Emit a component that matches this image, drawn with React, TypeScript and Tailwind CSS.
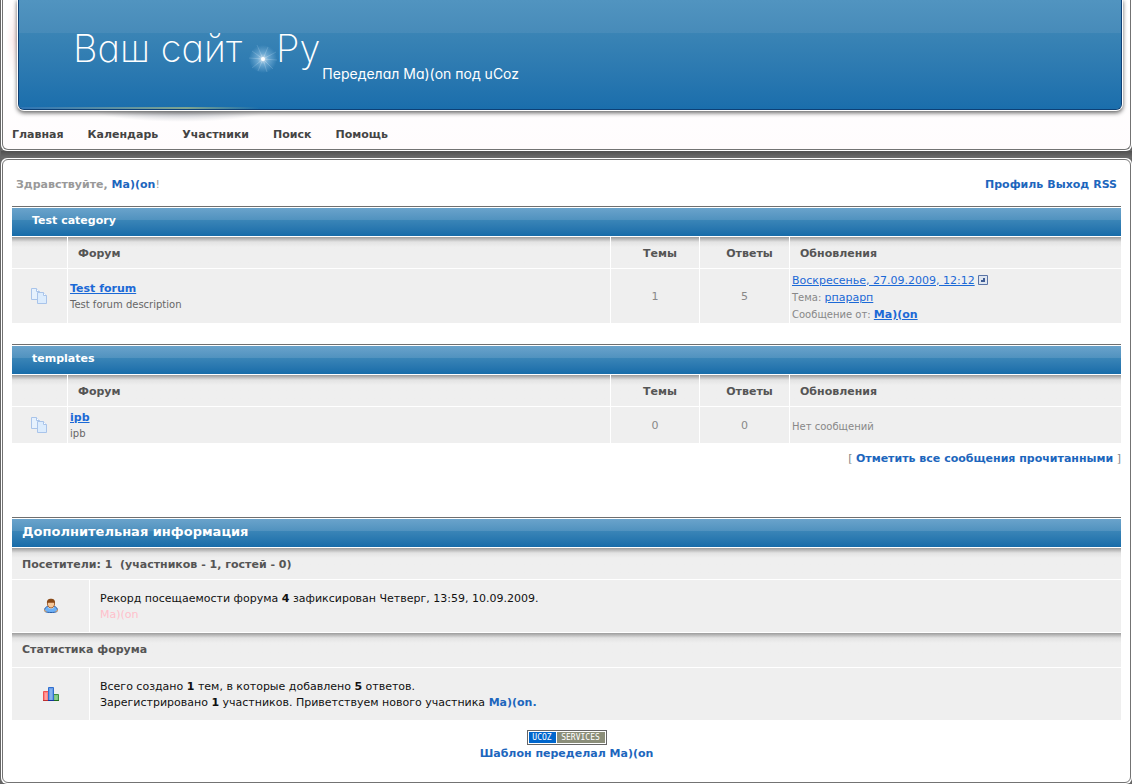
import type { ReactNode } from 'react';

type Forum = {
  title: string;
  description: string;
  topics: number;
  replies: number;
  last?: { date: string; topic: string; author: string };
};

type Category = {
  title: string;
  rowClass: string;
  forums: Forum[];
};

const menu = ['Главная', 'Календарь', 'Участники', 'Поиск', 'Помощь'];

const categories: Category[] = [
  {
    title: 'Test category',
    rowClass: 'h-[54px]',
    forums: [
      {
        title: 'Test forum',
        description: 'Test forum description',
        topics: 1,
        replies: 5,
        last: {
          date: 'Воскресенье, 27.09.2009, 12:12',
          topic: 'рпарарп',
          author: 'Ma)(on',
        },
      },
    ],
  },
  {
    title: 'templates',
    rowClass: 'h-9',
    forums: [{ title: 'ipb', description: 'ipb', topics: 0, replies: 0 }],
  },
];

const headCell =
  'border-b border-white bg-linear-to-b from-[#9c9c9c] via-[#e3e3e3] via-[5px] to-[#efefef] to-[10px] font-bold text-[#555]';

function TitleBar({ children }: { children: ReactNode }) {
  return (
    <div className="border-t border-[#6f6f6f] pt-px">
      <h2 className="flex h-7 items-center bg-linear-to-b from-[#6aa3cb] from-0% via-[#5092bf] via-[12px] to-[#3a85b7] to-[12px]">
        <span className="flex h-full w-full items-center bg-linear-to-b from-transparent from-[12px] via-[#3a85b7] via-[12px] to-[#176ca9] pb-0.5 font-bold text-white">
          {children}
        </span>
      </h2>
    </div>
  );
}

function PagesIcon() {
  return (
    <svg width="17" height="18" viewBox="1 0 17 18" className="mx-auto" aria-hidden="true">
      <path d="M1.5 1.5h5l3 3v8h-8z" fill="#e6f1fd" stroke="#a9c4ea" />
      <path d="M6.5 1.5v3h3" fill="#fff" stroke="#a9c4ea" />
      <path d="M7.5 5.5h6l3 3v8h-9z" fill="#dcecfd" stroke="#a9c4ea" />
      <path d="M13.5 5.5v3h3" fill="#fff" stroke="#a9c4ea" />
    </svg>
  );
}

function UserIcon() {
  return (
    <svg width="16" height="16" viewBox="0 0 16 16" className="mx-auto" aria-hidden="true">
      <path
        d="M4.500 8.500C2.500 9 1.500 10.500 1.500 12.500c0 1 1.500 2 6.500 2s6.500-1 6.500-2c0-2-1-3.500-3-4z"
        fill="#6db1f7"
        stroke="#2b5fa8"
      />
      <path d="M1.500 11.500v1.500l2 .5M14.500 11.500v1.500l-2 .5" fill="none" stroke="#d49a62" />
      <path d="M5 9.500q3 2 6 0" fill="none" stroke="#c6e2ff" />
      <path d="M4.500 4.500h7v2.500q-1 3-3.500 3t-3.500-3z" fill="#f5c89a" stroke="#a8683a" />
      <path d="M4 5.500C3.500 2 5.500.8 8 .8s4.500 1.200 4 4.700L10.500 4h-5z" fill="#8a4a17" />
    </svg>
  );
}

function ChartIcon() {
  return (
    <svg width="16" height="16" viewBox="0 0 16 16" className="mx-auto" aria-hidden="true">
      <path d="M.5 5.500h5v9h-5z" fill="#ff8080" stroke="#ee5050" />
      <path d="M2.500 7.500h1v6h-1z" fill="#ffc9c9" stroke="#ffa0a0" />
      <path d="M10.500 8.500h5v6h-5z" fill="#7fc67f" stroke="#3f8f3f" />
      <path d="M12.500 10.500h1v3h-1z" fill="#aee0ae" stroke="#8ccf8c" />
      <path d="M5.500 1.500h5v13h-5z" fill="#6c9ee6" stroke="#2f6fd0" />
      <path d="M7.500 3.500h1v10h-1z" fill="#8fbcf5" stroke="#86b2ee" />
      <path d="M5 14.500h6" stroke="#17329c" />
      <path d="M0 14.500h5" stroke="#c03030" />
      <path d="M11 14.500h5" stroke="#1f6f1f" />
    </svg>
  );
}

function LastPostIcon() {
  return (
    <svg width="10" height="10" viewBox="0 0 10 10" aria-hidden="true">
      <path d="M.5.5h9v9h-9z" fill="#dfe6f0" stroke="#5a74a6" />
      <path d="M7 3v4H3V5h2V3z" fill="#3f5c94" />
    </svg>
  );
}

function Star() {
  return (
    <svg width="30" height="30" viewBox="0 0 30 30" aria-hidden="true">
      <defs>
        <radialGradient id="halo">
          <stop offset="0" stopColor="#fff" stopOpacity="0.8" />
          <stop offset="0.4" stopColor="#9ccbeb" stopOpacity="0.55" />
          <stop offset="1" stopColor="#8fc2e6" stopOpacity="0" />
        </radialGradient>
        <radialGradient id="rays" gradientUnits="userSpaceOnUse" cx="15" cy="15" r="14">
          <stop offset="0" stopColor="#fff" stopOpacity="0.3" />
          <stop offset="1" stopColor="#b5d8f0" stopOpacity="0.2" />
        </radialGradient>
      </defs>
      <circle cx="15" cy="15" r="14" fill="url(#halo)" />
      <path
        d="M15 15 9 1M15 15 20 3M15 15 28 8M15 15 29 16M15 15 25 25M15 15 19 28M15 15 10 27M15 15 4 24M15 15 1 14M15 15 4 7"
        stroke="url(#rays)"
      />
      <circle cx="15" cy="15" r="2" fill="#fff" />
    </svg>
  );
}

function Header() {
  return (
    <header className="rounded-b-md bg-white px-px pb-px">
      <div className="rounded-b-md border-x border-b border-[#737373] bg-linear-to-b from-white via-white to-[#fffcfd]">
        <div className="relative mr-2 ml-[15px]">
          <div className="absolute top-0 -left-3 h-20 w-3 bg-linear-to-l from-[#fbdede] to-transparent mask-[linear-gradient(transparent,black,transparent)]" />
          <div className="absolute top-[110px] left-[75px] h-3 w-44 bg-[radial-gradient(ellipse_at_top,#b9bdc6,transparent_70%)]" />
          <div className="relative flex h-[110px] overflow-hidden rounded-b-md border-r border-b border-l border-[#0d4076] bg-linear-to-b from-[#5194c0] via-[#478bb9] via-[33px] to-[#478bb9] to-[33px] shadow-[0_0_0_1px_#fff,0_2px_4px_1px_#666]">
            <div className="flex w-full items-start bg-linear-to-b from-transparent from-[33px] via-[#3a84b5] via-[33px] to-[#1a6eac] pl-[54px] font-['Inter',sans-serif] text-white [font-feature-settings:'cv11']">
              <div className="flex pt-6 text-[38px] leading-[48px] font-extralight">
                <span className="w-[175px] whitespace-nowrap">Ваш сайт</span>
                <span className="w-7 pt-5">
                  <Star />
                </span>
                <span>Ру</span>
              </div>
              <p className="pt-16 pl-0.5 text-[14px] leading-5 whitespace-nowrap">
                Переделал Ма)(on под uCoz
              </p>
            </div>
            <div className="absolute bottom-0 left-0 h-0.5 w-60 bg-linear-to-r from-[#2e74b5] via-[#7fa58f] via-70% to-transparent" />
          </div>
        </div>
        <nav className="flex h-[39px] items-center gap-6 pt-2.5 pl-[9px] font-bold text-[#444]">
          {menu.map((item) => (
            <a key={item} href="#">
              {item}
            </a>
          ))}
        </nav>
      </div>
    </header>
  );
}

function CategoryTable({ category }: { category: Category }) {
  return (
    <section>
      <TitleBar>
        <span className="pl-5">{category.title}</span>
      </TitleBar>
      <table className="mt-px w-full table-fixed border-separate border-spacing-0">
        <colgroup>
          <col className="w-[55px]" />
          <col />
          <col className="w-[89px]" />
          <col className="w-[90px]" />
          <col className="w-[332px]" />
        </colgroup>
        <thead>
          <tr className="h-8">
            <th className={headCell} />
            <th className={`${headCell} border-l pt-0.5 pl-2.5 text-left`}>Форум</th>
            <th className={`${headCell} border-l pt-0.5 pl-2.5`}>Темы</th>
            <th className={`${headCell} border-l pt-0.5 pl-2.5`}>Ответы</th>
            <th className={`${headCell} border-l pt-0.5 pl-2.5 text-left`}>Обновления</th>
          </tr>
        </thead>
        <tbody>
          {category.forums.map((forum) => (
            <tr key={forum.title} className={`${category.rowClass} bg-[#efefef] text-[#888]`}>
              <td>
                <PagesIcon />
              </td>
              <td className="border-l border-white pt-0.5 pl-0.5">
                <a href="#" className="block w-fit font-bold text-[#1b69d6] underline">
                  {forum.title}
                </a>
                <p className="text-[10px] text-[#666]">{forum.description}</p>
              </td>
              <td className="border-l border-white pt-0.5 text-center">{forum.topics}</td>
              <td className="border-l border-white pt-0.5 text-center">{forum.replies}</td>
              <td className="border-l border-white pt-0.5 pl-0.5 text-[10px] leading-[17px]">
                {forum.last ? (
                  <>
                    <div className="flex items-center gap-[3px] text-[11px]">
                      <a href="#" className="text-[#1b69d6] underline">
                        {forum.last.date}
                      </a>
                      <LastPostIcon />
                    </div>
                    <div>
                      Тема:{' '}
                      <a href="#" className="text-[11px] text-[#1b69d6] underline">
                        {forum.last.topic}
                      </a>
                    </div>
                    <div>
                      Сообщение от:{' '}
                      <a href="#" className="text-[11px] font-bold text-[#1b69d6] underline">
                        {forum.last.author}
                      </a>
                    </div>
                  </>
                ) : (
                  'Нет сообщений'
                )}
              </td>
            </tr>
          ))}
        </tbody>
      </table>
    </section>
  );
}

function InfoRow({ icon, children }: { icon: ReactNode; children: ReactNode }) {
  return (
    <div className="flex h-[53px] border-b border-white bg-[#efefef]">
      <div className="flex w-[77px] shrink-0 items-center">{icon}</div>
      <div className="flex-1 border-l border-white pt-[11px] pl-2.5 text-[#111]">{children}</div>
    </div>
  );
}

function ForumInfo() {
  return (
    <section className="mt-[50px]">
      <TitleBar>
        <span className="pl-2.5 text-[13px]">Дополнительная информация</span>
      </TitleBar>
      <h3 className={`${headCell} mt-px flex h-8 items-center pt-0.5 pl-2.5 whitespace-pre`}>
        {'Посетители: 1  (участников - 1, гостей - 0)'}
      </h3>
      <InfoRow icon={<UserIcon />}>
        <p>
          Рекорд посещаемости форума <b>4</b> зафиксирован Четверг, 13:59, 10.09.2009.
        </p>
        <a href="#" className="text-[#ffc0cb]">
          Ma)(on
        </a>
      </InfoRow>
      <h3 className={`${headCell} flex h-[35px] items-center pl-2.5`}>Статистика форума</h3>
      <InfoRow icon={<ChartIcon />}>
        <p>
          Всего создано <b>1</b> тем, в которые добавлено <b>5</b> ответов.
        </p>
        <p>
          Зарегистрировано <b>1</b> участников. Приветствуем нового участника{' '}
          <a href="#" className="font-bold text-[#1d66bd]">
            Ma)(on.
          </a>
        </p>
      </InfoRow>
    </section>
  );
}

function Footer() {
  return (
    <footer className="flex flex-col items-center gap-px pt-[9px] pb-5">
      <a
        href="#"
        className="flex h-[15px] w-20 border border-[#666] bg-white p-px font-['DejaVu_Sans_Mono'] text-[8px] leading-[11px] text-white"
      >
        <span className="w-[27px] bg-[#06c] text-center">UCOZ</span>
        <span className="ml-px flex-1 bg-[#8b8e79] text-center">SERVICES</span>
      </a>
      <a href="#" className="font-bold text-[#1d66bd]">
        Шаблон переделал Ma)(on
      </a>
    </footer>
  );
}

export default function App() {
  return (
    <div className="min-h-screen bg-[#666] pl-px font-['Verdana','DejaVu_Sans',sans-serif] text-[11px] leading-4">
      <Header />
      <div className="h-[7px] bg-linear-to-b from-[#505050] to-[#6c6c6c]" />
      <main className="rounded-md bg-white p-px">
        <div className="rounded-md border border-[#737373] bg-white px-[9px]">
          <div className="flex h-[46px] items-center justify-between pt-1 pr-1 pl-1 font-bold">
            <p className="text-[#999]">
              Здравствуйте,{' '}
              <a href="#" className="text-[#1d66bd]">
                Ma)(on
              </a>
              <span className="font-normal">!</span>
            </p>
            <div className="flex gap-1 text-[#1d66bd]">
              <a href="#">Профиль</a>
              <a href="#">Выход</a>
              <a href="#">RSS</a>
            </div>
          </div>
          <div className="flex flex-col gap-[21px]">
            {categories.map((category) => (
              <CategoryTable key={category.title} category={category} />
            ))}
          </div>
          <p className="pt-2 text-right text-[#888]">
            [{' '}
            <a href="#" className="font-bold text-[#1d66bd]">
              Отметить все сообщения прочитанными
            </a>{' '}
            ]
          </p>
          <ForumInfo />
          <Footer />
        </div>
      </main>
    </div>
  );
}
